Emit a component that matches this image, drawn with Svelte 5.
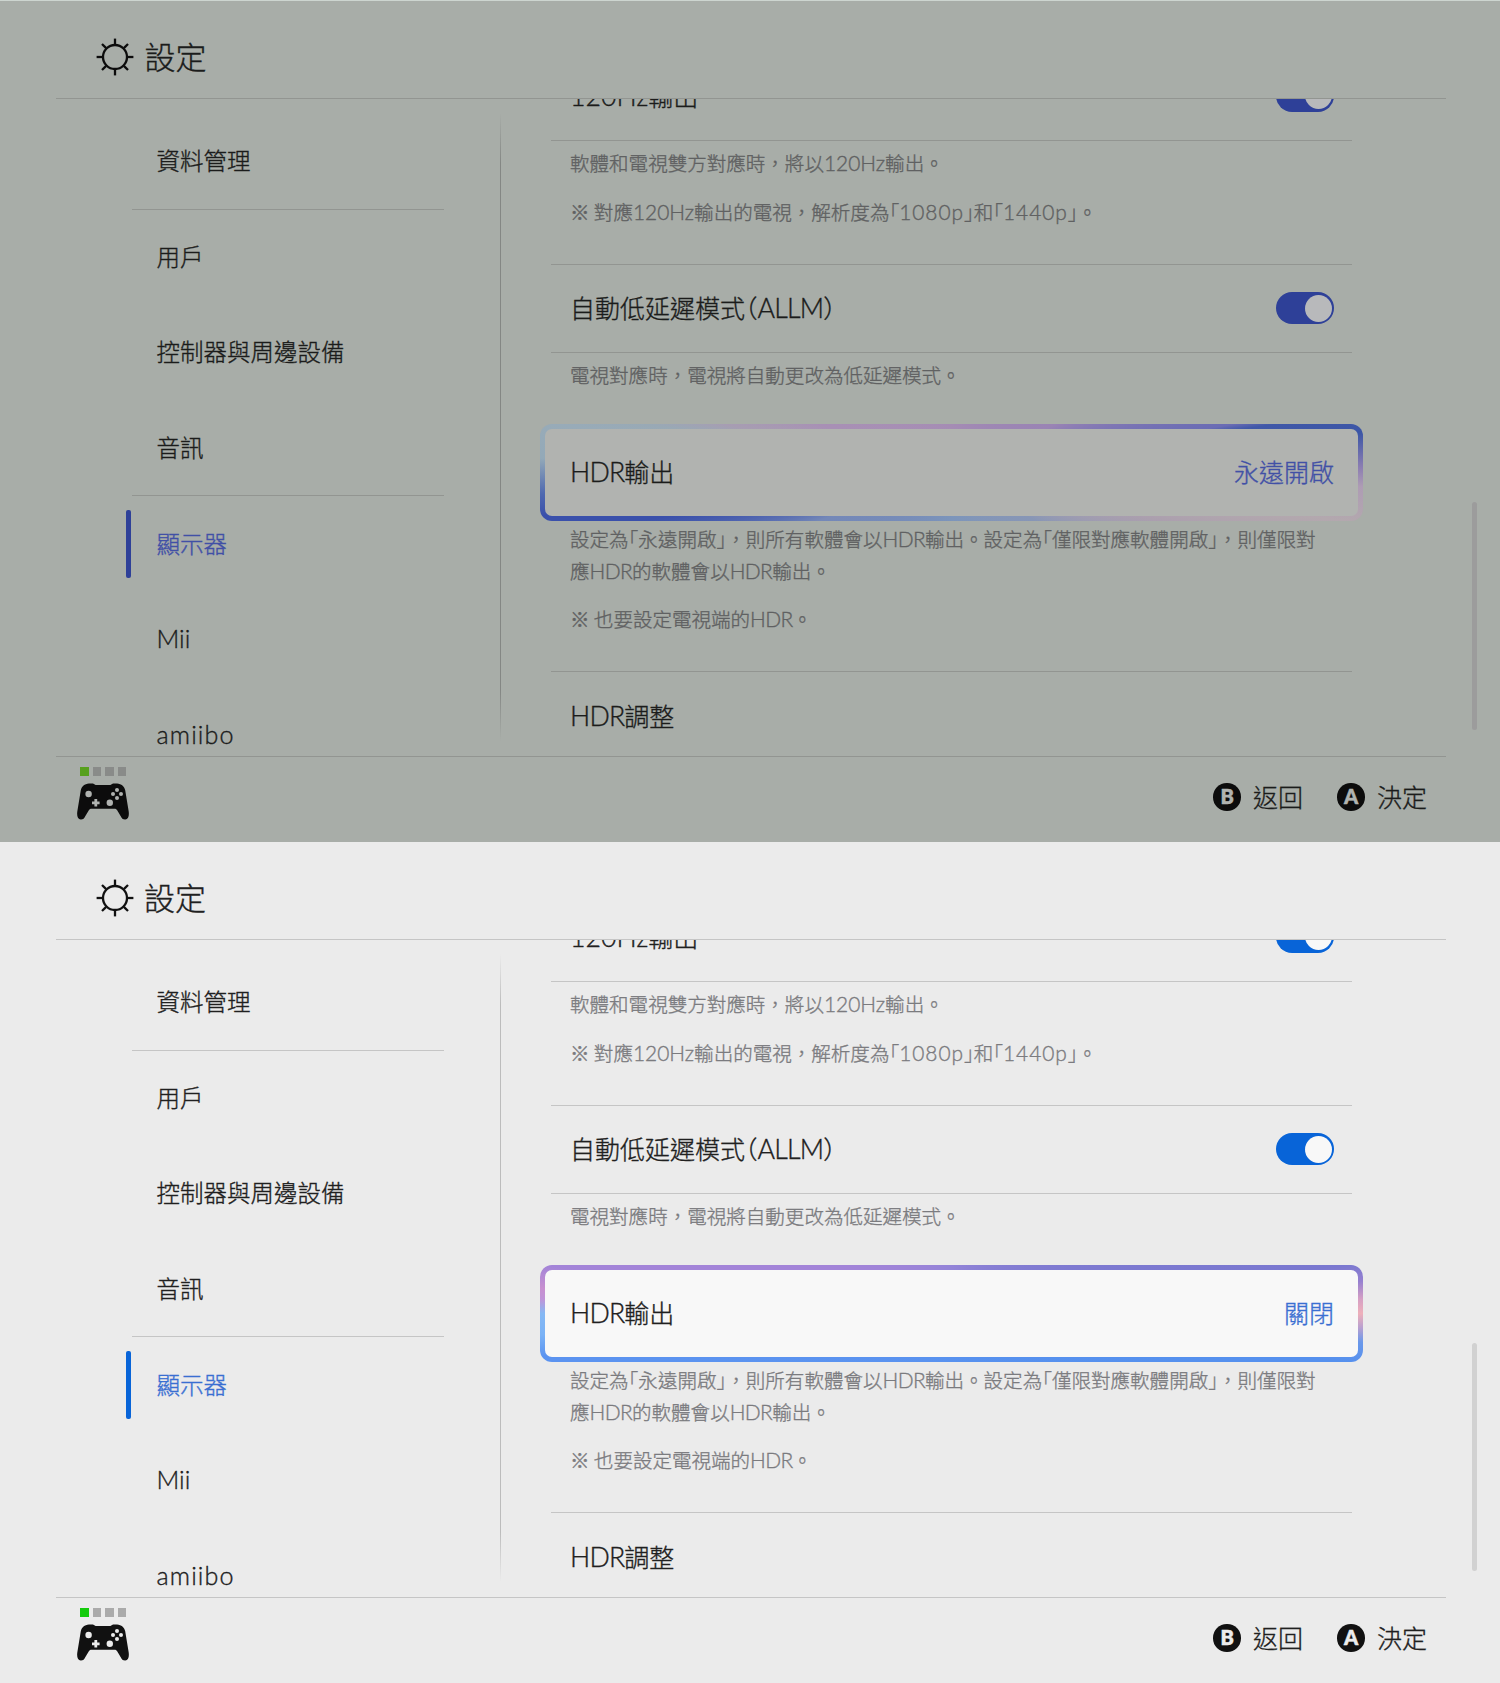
<script>
  const sidebar = [
    { label: '資料管理', rule: true },
    { label: '用戶' },
    { label: '控制器與周邊設備' },
    { label: '音訊', rule: true },
    { label: '顯示器', active: true },
    { label: 'Mii' },
    { label: 'amiibo' }
  ];

  const screens = [
    { theme: 'dim', value: '永遠開啟' },
    { theme: 'bright', value: '關閉' }
  ];

  function kindOf(t) {
    if (/^[A-Z]+$/.test(t)) return 'caps';
    if (/^[a-z]+$/.test(t) || /^\d+p$/.test(t)) return 'latin wide';
    if (/^[A-Za-z0-9]/.test(t)) return 'latin';
    return /^[「」（）]/.test(t) ? 'half' : 'cjk';
  }

  // Splits a string into CJK, Latin and bracket runs so each gets its own spacing.
  function runs(text) {
    return text
      .split(/([A-Za-z0-9]+|[「」（）])/)
      .filter(Boolean)
      .map((t) => ({ t, kind: kindOf(t) }));
  }
</script>

{#snippet rich(text)}{#each runs(text) as r}<span class={r.kind}>{r.t}</span>{/each}{/snippet}

{#snippet toggle()}<span class="toggle"><i></i></span>{/snippet}

<main>
  {#each screens as s}
    <section class="screen {s.theme}">
      <header>
        <svg class="gear" viewBox="-19 -19 38 38" fill="none" stroke="currentColor" stroke-width="2.3">
          <circle r="12" />
          {#each [0, 45, 90, 135, 180, 225, 270, 315] as a}
            <path d="M0 -12.5V-18.4" transform="rotate({a})" />
          {/each}
        </svg>
        <h1>設定</h1>
      </header>

      <div class="body">
        <nav>
          {#each sidebar as item}
            <div class="item" class:active={item.active} class:rule={item.rule}>
              <span class="label">{@render rich(item.label)}</span>
            </div>
          {/each}
        </nav>
        <div class="split"></div>
        <div class="content">
          <div class="row first under"><span class="label">{@render rich('120Hz輸出')}</span>{@render toggle()}</div>
          <div class="desc d1">
            <p>{@render rich('軟體和電視雙方對應時，將以120Hz輸出。')}</p>
            <p>{@render rich('※ 對應120Hz輸出的電視，解析度為「1080p」和「1440p」。')}</p>
          </div>
          <div class="row over under"><span class="label">{@render rich('自動低延遲模式（ALLM）')}</span>{@render toggle()}</div>
          <div class="desc d2">
            <p>{@render rich('電視對應時，電視將自動更改為低延遲模式。')}</p>
          </div>
          <div class="focus">
            <span class="label">{@render rich('HDR輸出')}</span>
            <span class="label value">{s.value}</span>
          </div>
          <div class="desc d3">
            <p>
              {@render rich('設定為「永遠開啟」，則所有軟體會以HDR輸出。設定為「僅限對應軟體開啟」，則僅限對')}<br />{@render rich('應HDR的軟體會以HDR輸出。')}
            </p>
            <p>{@render rich('※ 也要設定電視端的HDR。')}</p>
          </div>
          <div class="row over"><span class="label">{@render rich('HDR調整')}</span></div>
        </div>
        <div class="scroll"></div>
      </div>

      <footer>
        <div class="pad">
          <div class="leds"><i class="on"></i><i></i><i></i><i></i></div>
          <svg viewBox="0 0 52 37">
            <path
              fill="currentColor"
              d="M12 .4 16 .5 18.6 2H33.4L36 .5 40 .4C44.6 .9 47.2 3 48.2 7.200L51.700 28.500C52.300 33 51.300 36.400 48.300 36.600 45.900 36.700 44.700 35.300 43.600 33L40 27C39.300 26 38.600 25.700 37.400 25.700H14.600C13.400 25.700 12.700 26 12 27L8.400 33C7.300 35.300 6.100 36.700 3.700 36.600 .7 36.400-.3 33 .3 28.500L3.800 7.200C4.800 3 7.400 .9 12 .4Z"
            />
            <g class="holes">
              <circle cx="11.600" cy="11" r="3.200" />
              <circle cx="32.800" cy="19.800" r="3.200" />
              <circle cx="40" cy="7" r="2" />
              <circle cx="40" cy="15" r="2" />
              <circle cx="36" cy="11" r="2" />
              <circle cx="44" cy="11" r="2" />
              <path d="M17.400 16.100h2.800v2.300h2.400v2.800h-2.400v2.400h-2.800v-2.400H15v-2.800h2.400z" />
            </g>
          </svg>
        </div>
        <div class="actions">
          <b>B</b><span class="label back">返回</span>
          <b>A</b><span class="label">決定</span>
        </div>
      </footer>
    </section>
  {/each}
</main>

<style>
  :global(body) {
    margin: 0;
    background: #ebebeb;
  }
  main {
    width: 1500px;
    height: 1683px;
    overflow: hidden;
    font-family: 'Noto Sans CJK TC', sans-serif;
    font-weight: 300;
    -webkit-text-stroke: 0.35px currentColor;
  }
  .screen {
    box-sizing: border-box;
    display: flex;
    flex-direction: column;
    height: 842px;
    background: var(--bg);
    color: var(--ink);
  }
  .dim {
    --bg: #a8ada8;
    --ink: #1b1c1b;
    --muted: #606162;
    --line: #929591;
    --split: #848784;
    --blue: #2e4098;
    --blue-text: #4150a6;
    --card: #b1b3b0;
    --knob: #b8b9bb;
    --glyph: #b0b3b0;
    --icon: #0c0c0c;
    --led: #898b89;
    --led-on: #57a01d;
    --thumb: #9c9c9c;
    --ring: conic-gradient(
      #a58cb4 0deg, #9a84b4 65deg, #6a6cb4 80.3deg, #4058a8 81.5deg, #3c56a6 84.500deg, #8c7eb2 89.300deg,
      #ae9cb4 92deg, #b3a8ae 97deg, #ab9fae 103deg, #8796b6 120deg, #7c95bb 180deg, #7488b8 250deg, #3a50ab 261.200deg,
      #3a50ab 264deg, #4e68b0 267deg, #93a9b8 272deg, #98abb8 277deg, #99a9b5 279deg, #a79db2 282deg, #a890b5 290deg, #a58cb4 360deg
    );
    border-top: 1px solid #cdd5d0;
  }
  .bright {
    --bg: #ebebeb;
    --ink: #202020;
    --muted: #7b7b7f;
    --line: #c5c5c5;
    --split: #bcbcbc;
    --blue: #0864d8;
    --blue-text: #3a6fd2;
    --card: #f8f8f8;
    --knob: #f8f8f8;
    --glyph: #ececec;
    --icon: #111;
    --led: #aaa;
    --led-on: #14cb0c;
    --thumb: #d1d1d1;
    --ring: conic-gradient(
      #9384d8 0deg, #7a78d0 83deg, #9680d0 85.500deg, #d6a0c4 88deg, #eeb0ba 90deg, #b8a0d0 92deg, #6a98ea 94deg,
      #5590ee 97deg, #5b93f0 264deg, #7ab2f6 267deg, #85b8f4 270deg, #c094d8 272deg, #c890d0 273.500deg, #a384d8 276.700deg,
      #a384d8 290deg, #9384d8 360deg
    );
  }
  header {
    display: flex;
    flex: none;
    align-items: center;
    box-sizing: border-box;
    height: 97px;
    padding: 15px 0 0 96px;
  }
  .bright header {
    padding-left: 95.500px;
  }
  .gear {
    width: 38px;
    height: 38px;
    color: var(--icon);
  }
  h1 {
    margin: 0 0 0 10.500px;
    padding-bottom: 3px;
    font-size: 31px;
    font-weight: 300;
    line-height: 40px;
  }
  .body {
    display: flex;
    flex: none;
    box-sizing: border-box;
    width: 1390px;
    height: 659px;
    margin-left: 56px;
    border-top: 1px solid var(--line);
    border-bottom: 1px solid var(--line);
  }
  nav {
    flex: none;
    width: 388px;
    padding: 15px 0 0 70px;
    box-sizing: border-box;
  }
  .item {
    display: flex;
    align-items: center;
    box-sizing: border-box;
    height: 95.600px;
    margin-left: 5.500px;
    padding-left: 25px;
    font-size: 23.500px;
    line-height: 30px;
  }
  .label {
    padding-bottom: 3px;
  }
  .rule {
    border-bottom: 1px solid var(--line);
  }
  .active {
    margin-left: 0;
    padding-left: 0;
    color: var(--blue-text);
  }
  .active::before {
    content: '';
    width: 5px;
    height: 68px;
    margin-right: 25.500px;
    border-radius: 2px;
    background: var(--blue);
  }
  .split {
    flex: none;
    width: 1px;
    height: 628px;
    margin: 14px 39px 0 56px;
    background: linear-gradient(transparent, var(--split) 8%, var(--split) 92%, transparent);
  }
  .content {
    flex: none;
    width: 824px;
    height: 657px;
    overflow: hidden;
  }
  .row {
    display: flex;
    align-items: center;
    justify-content: space-between;
    box-sizing: border-box;
    width: 801px;
    height: 89px;
    margin-left: 11px;
    padding: 0 18px 0 19px;
    font-size: 25px;
    line-height: 34px;
  }
  .first {
    margin-top: -47px;
  }
  .under {
    border-bottom: 1px solid var(--line);
  }
  .over {
    border-top: 1px solid var(--line);
  }
  .toggle {
    display: flex;
    justify-content: flex-end;
    box-sizing: border-box;
    width: 58px;
    height: 32px;
    margin-bottom: 1px;
    padding: 2.500px;
    border-radius: 16px;
    background: var(--blue);
  }
  .toggle i {
    width: 27px;
    height: 27px;
    border-radius: 50%;
    background: var(--knob);
  }
  .desc {
    box-sizing: border-box;
    padding-left: 30px;
    color: var(--muted);
    font-size: 19.550px;
    line-height: 31.500px;
    white-space: nowrap;
  }
  .desc p {
    margin: 0;
  }
  .desc p + p {
    margin-top: 16.500px;
  }
  .d1 {
    height: 123px;
    padding-top: 6px;
  }
  .desc.d1 p + p {
    margin-top: 17px;
  }
  .d2 {
    height: 71px;
    padding-top: 6px;
  }
  .d3 {
    height: 150px;
    padding-top: 2px;
  }
  .focus {
    display: flex;
    align-items: center;
    justify-content: space-between;
    box-sizing: border-box;
    width: 823px;
    height: 97px;
    padding: 0 24px 0 25px;
    border: 5px solid transparent;
    border-radius: 12px;
    background:
      linear-gradient(var(--card), var(--card)) padding-box,
      var(--ring) border-box;
    font-size: 25px;
    line-height: 34px;
  }
  .value {
    color: var(--blue-text);
  }
  .half {
    font-feature-settings: 'halt';
  }
  .caps,
  .latin {
    font-family: Lato, 'Noto Sans CJK TC', sans-serif;
    font-size: 1.07em;
    line-height: 1;
  }
  .caps {
    letter-spacing: -0.03em;
  }
  .wide {
    letter-spacing: 0.045em;
  }
  .scroll {
    flex: none;
    width: 5px;
    height: 228px;
    margin: 403px 0 0 108px;
    border-radius: 3px;
    background: var(--thumb);
  }
  footer {
    display: flex;
    justify-content: space-between;
    padding: 10px 73px 0 77px;
  }
  .leds {
    display: flex;
    gap: 4px;
    padding-left: 3px;
  }
  .leds i {
    width: 8.600px;
    height: 9px;
    background: var(--led);
  }
  .leds .on {
    background: var(--led-on);
  }
  .pad svg {
    display: block;
    width: 52px;
    height: 37px;
    margin-top: 6.500px;
    color: var(--icon);
  }
  .holes {
    fill: var(--glyph);
  }
  .actions {
    display: flex;
    align-items: center;
    height: 34px;
    margin-top: 13px;
    font-size: 25px;
  }
  .actions b {
    width: 27.500px;
    height: 27.500px;
    margin-right: 12px;
    border-radius: 50%;
    background: var(--icon);
    color: var(--glyph);
    font: 800 20px/27.500px Lato, sans-serif;
    text-align: center;
  }
  .actions .back {
    margin-right: 34.500px;
  }
</style>
